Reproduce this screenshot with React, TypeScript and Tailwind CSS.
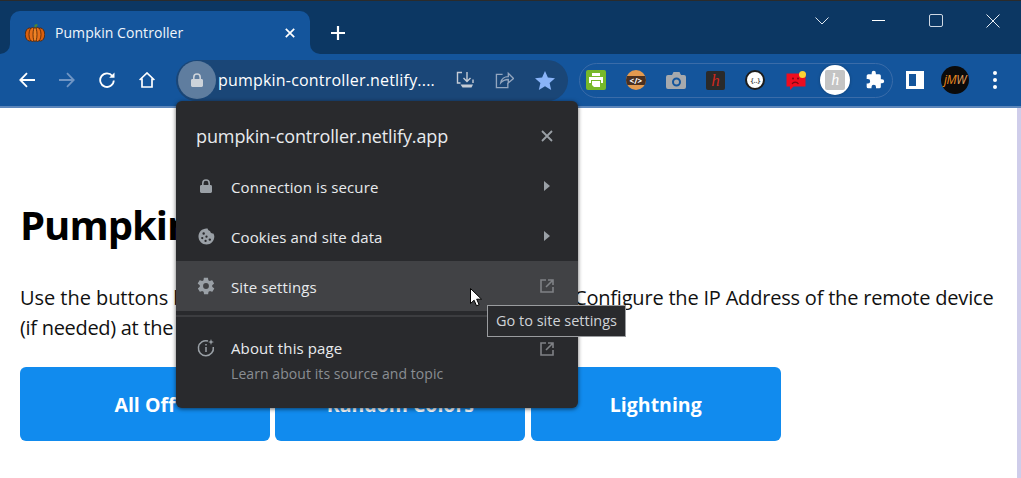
import React from "react";

const F = "font-['Open_Sans',sans-serif]";

function Lock({ className = "" }: { className?: string }) {
  return (
    <svg viewBox="0 0 12 14" className={className} fill="currentColor">
      <path d="M2 6V4.2A4 4 0 0 1 10 4.2V6h.6c.8 0 1.4.6 1.4 1.4v5.2c0 .8-.6 1.4-1.4 1.4H1.4C.6 14 0 13.4 0 12.6V7.4C0 6.6.6 6 1.4 6H2zm1.6 0h4.800V4.2a2.4 2.4 0 0 0-4.800 0V6z" />
    </svg>
  );
}

function External() {
  return (
    <svg viewBox="0 0 14 14" className="w-[14px] h-[14px] text-[#7f8185]" fill="none" stroke="currentColor" strokeWidth="1.6">
      <path d="M6 1H1v12h12V8" />
      <path d="M8 1h5v5M13 1 6 8" />
    </svg>
  );
}

function Row({ icon, label, right, className = "" }: { icon: React.ReactNode; label: string; right?: React.ReactNode; className?: string }) {
  return (
    <div className={`flex items-center h-[50px] pl-[20px] pr-[24px] ${className}`}>
      <div className="w-[20px] h-[20px] flex items-center justify-center text-[#9aa0a6]">{icon}</div>
      <div className="ml-[15px] mt-[2px] flex-1 text-[15px] tracking-[0.008em] text-[#e8eaed]">{label}</div>
      {right}
    </div>
  );
}

const Tri = () => <div className="w-0 h-0 mr-[4px] border-y-[5px] border-y-transparent border-l-[6px] border-l-[#9aa0a6]" />;

function Ext({ children }: { children: React.ReactNode }) {
  return <div className="w-8 h-8 flex items-center justify-center relative">{children}</div>;
}

const Btn = ({ label }: { label: string }) => (
  <div className="w-[250px] h-[74px] pt-[1px] rounded-[6px] bg-[#118bee] flex items-center justify-center text-[19.500px] font-bold text-white">{label}</div>
);

export default function App() {
  return (
    <div className={`relative w-[1021px] h-[478px] overflow-hidden bg-white ${F}`}>
      {/* title bar */}
      <div className="h-[54px] bg-[#0c3763] border-t border-t-[#2b2b2b] flex items-end">
        <div className="relative ml-[10px] w-[300px] h-[43px] bg-[#14559c] rounded-t-[10px] flex items-center pl-[15px] pr-[15px]">
          <div className="absolute -left-[10px] bottom-0 w-[10px] h-[10px] bg-[#14559c]"><div className="w-full h-full bg-[#0c3763] rounded-br-[10px]" /></div>
          <div className="absolute -right-[10px] bottom-0 w-[10px] h-[10px] bg-[#14559c]"><div className="w-full h-full bg-[#0c3763] rounded-bl-[10px]" /></div>
          <svg viewBox="0 0 20 20" className="w-5 h-5 shrink-0">
            <path d="M9.500 5.500V1.800l2.700-.8.500 1.500-1.300.5v2.500z" fill="#4f8a28" />
            <ellipse cx="4.500" cy="11.500" rx="4.200" ry="6.500" fill="#d9600f" stroke="#4a2206" strokeWidth=".8" />
            <ellipse cx="15.500" cy="11.500" rx="4.200" ry="6.500" fill="#d9600f" stroke="#4a2206" strokeWidth=".8" />
            <ellipse cx="7.500" cy="11.500" rx="3.500" ry="7" fill="#e8701a" stroke="#4a2206" strokeWidth=".8" />
            <ellipse cx="12.500" cy="11.500" rx="3.500" ry="7" fill="#e8701a" stroke="#4a2206" strokeWidth=".8" />
            <ellipse cx="10" cy="11.500" rx="2" ry="7.200" fill="#f08426" stroke="#4a2206" strokeWidth=".8" />
          </svg>
          <span className="ml-[10px] flex-1 text-[14px] tracking-[0.004em] text-[#f0f5fb]">Pumpkin Controller</span>
          <svg viewBox="0 0 10 10" className="w-[10px] h-[10px] text-white" stroke="currentColor" strokeWidth="1.7"><path d="M.8.8l8.400 8.400M9.200.8.8 9.200" /></svg>
        </div>
        <div className="ml-[20px] w-4 h-[43px] flex items-center">
          <svg viewBox="0 0 16 16" className="w-4 h-4 text-white" stroke="currentColor" strokeWidth="2.200"><path d="M8 1v14M1 8h14" /></svg>
        </div>
        <div className="flex-1" />
        <div className="h-[53px] flex items-start pt-[13px]">
          <svg viewBox="0 0 14 8" className="w-[14px] h-[8px] mt-[3px] mr-[21px] text-[#dfe7f0]" fill="none" stroke="currentColor"><path d="M.5.5 7 7 13.500.5" /></svg>
          <div className="w-[57px] flex justify-center"><div className="w-[13px] h-px mt-[6px] bg-white" /></div>
          <div className="w-[57px] flex justify-center"><div className="w-[14px] h-[13px] border border-[#cfd8e3] rounded-[2px]" /></div>
          <div className="w-[57px] flex justify-center">
            <svg viewBox="0 0 14 14" className="w-[14px] h-[14px] text-[#e8eef5]" stroke="currentColor" strokeWidth="1"><path d="M.5.5l13 13M13.500.5l-13 13" /></svg>
          </div>
        </div>
      </div>

      {/* toolbar */}
      <div className="h-[54px] bg-[#14559c] border-b-2 border-b-[#5c86bb] flex items-center pl-[7px]">
        <div className="w-10 flex justify-center">
          <svg viewBox="0 0 16 16" className="w-4 h-4 text-white" fill="none" stroke="currentColor" strokeWidth="1.800"><path d="M16 8H1.500M8 1.200 1.300 8 8 14.800" /></svg>
        </div>
        <div className="w-10 flex justify-center">
          <svg viewBox="0 0 16 16" className="w-4 h-4 text-[#6f95c4]" fill="none" stroke="currentColor" strokeWidth="1.800"><path d="M0 8h14.500M8 1.200 14.700 8 8 14.800" /></svg>
        </div>
        <div className="w-10 flex justify-center">
          <svg viewBox="0 0 16 16" className="w-4 h-4 text-white" fill="none" stroke="currentColor" strokeWidth="1.800"><path d="M13.400 4A6.800 6.800 0 1 0 14.800 8.500" /><path d="M15.500.5v5.300h-5.300z" fill="currentColor" stroke="none" /></svg>
        </div>
        <div className="w-10 flex justify-center">
          <svg viewBox="0 0 16 16" className="w-4 h-4 text-white" fill="none" stroke="currentColor" strokeWidth="1.700"><path d="M.6 8 8 1l7.400 7M3 6.500V15h10V6.500" /></svg>
        </div>
        {/* omnibox */}
        <div className="ml-[9px] w-[392px] h-[41px] rounded-full bg-[#1a4677] flex items-center pl-[2px] pr-[13px]">
          <div className="w-[38px] h-[38px] rounded-full bg-[#5f7d9f] flex items-center justify-center text-[#cdd3da]">
            <Lock className="w-[12px] h-[14px]" />
          </div>
          <span className="ml-[2px] text-[16px] text-white whitespace-nowrap w-[218px] tracking-[0.012em]">pumpkin-controller.netlify....</span>
          <div className="flex-1 flex items-center justify-between pl-[20px]">
            <svg viewBox="0 0 18 18" className="w-[18px] h-[18px] text-[#c5ccd6]" fill="none" stroke="currentColor" strokeWidth="1.400"><path d="M6 1.500H1.500v10.500h3" /><path d="M11 1v9M7.500 7l3.500 3.500L14.500 7M17 8.500V12" /><path d="M4.500 13.500h12.500l-1.500 3h-9z" fill="currentColor" stroke="none" /></svg>
            <svg viewBox="0 0 20 18" className="w-[19px] h-[18px] text-[#93a6bf]" fill="none" stroke="currentColor" strokeWidth="1.400"><path d="M8 3H1.500v14h12v-5" /><path d="M6 12c.5-4 4-6.500 8-6.500V2l5.500 5.500L14 12V8.500c-3.500 0-6 1.200-8 3.500z" /></svg>
            <svg viewBox="0 0 20 19" className="w-5 h-[19px] text-[#8ab4f8]" fill="currentColor"><path d="M10 0l2.900 6.600 7.100.7-5.400 4.700 1.600 7-6.200-3.700L3.800 19l1.600-7L0 7.300l7.100-.7z" /></svg>
          </div>
        </div>
        {/* extensions */}
        <div className="ml-[11px] w-[314px] h-[35px] rounded-full border border-[#3a6ca9] flex items-center gap-2 pr-[1px]">
          <Ext>
            <div className="w-5 h-5 rounded-[2px] bg-[#76b82a] flex items-center justify-center">
              <svg viewBox="0 0 16 16" className="w-4 h-4 text-white" fill="currentColor"><path d="M4 1h8v3H4zM1 5h14v6h-2V8H3v3H1z" /><path d="M4 9h8v6H6l-2-2z" /></svg>
            </div>
          </Ext>
          <Ext>
            <div className="w-5 h-5 rounded-full bg-[#e39a4f] flex items-center justify-center overflow-hidden">
              <div className="w-full h-[9px] bg-[#4a3020] text-[8px] leading-[9px] font-bold text-white text-center">&lt;/&gt;</div>
            </div>
          </Ext>
          <Ext>
            <svg viewBox="0 0 20 17" className="w-5 h-[17px] text-[#a6a9ad]" fill="currentColor"><path fillRule="evenodd" d="M6 3l1.500-3h6L15 3h3a2 2 0 0 1 2 2v10a2 2 0 0 1-2 2H2a2 2 0 0 1-2-2V5a2 2 0 0 1 2-2zm4.500 2.500a4.500 4.500 0 1 0 0 9 4.500 4.500 0 0 0 0-9zm0 2a2.500 2.500 0 1 1 0 5 2.500 2.500 0 0 1 0-5z" /></svg>
          </Ext>
          <Ext>
            <div className="w-[19px] h-[19px] rounded-[2px] bg-[#2a2a2a] flex items-center justify-center font-['Liberation_Serif',serif] italic text-[17px] leading-none text-[#d0281e]">h</div>
          </Ext>
          <Ext>
            <div className="w-5 h-5 rounded-full bg-white border-2 border-[#1d1d1d] flex items-center justify-center text-[7px] leading-none font-bold text-[#555]">{"{..}"}</div>
          </Ext>
          <Ext>
            <svg viewBox="0 0 21 21" className="w-[21px] h-[21px]"><path d="M1.500 3.500h19v13H8.500l-3.500 3.500v-3.500H1.500z" fill="#ee0d1f" /><circle cx="8" cy="8.500" r="1" fill="#7a0a14" /><circle cx="13" cy="8.500" r="1" fill="#7a0a14" /><path d="M7 14c1.500-2.500 5-2.500 6.500 0" stroke="#7a0a14" strokeWidth="1.200" fill="none" /><circle cx="17.500" cy="4.500" r="3.500" fill="#fbd335" /></svg>
          </Ext>
          <Ext>
            <div className="w-[30px] h-[30px] rounded-full bg-white flex items-center justify-center shrink-0 shadow-[0_0_3px_rgba(0,0,0,0.3)]">
              <div className="w-5 h-5 rounded-[2px] bg-[#c4c4c4] flex items-center justify-center font-['Liberation_Serif',serif] italic text-[16px] leading-none text-white">h</div>
            </div>
          </Ext>
          <Ext>
            <svg viewBox="0 0 24 24" className="w-[20px] h-[20px] text-white" fill="currentColor"><path d="M20.500 11H19V7a2 2 0 0 0-2-2h-4V3.500a2.500 2.500 0 0 0-5 0V5H4a2 2 0 0 0-2 2v3.800h1.500a2.700 2.700 0 0 1 0 5.400H2V20a2 2 0 0 0 2 2h3.800v-1.500a2.700 2.700 0 0 1 5.400 0V22H17a2 2 0 0 0 2-2v-4h1.500a2.500 2.500 0 0 0 0-5z" /></svg>
          </Ext>
        </div>
        <div className="ml-[2px] w-10 flex justify-center">
          <div className="w-[18px] h-[18px] border-[3px] border-r-[8px] border-white" />
        </div>
        <div className="w-10 flex justify-center">
          <div className="w-[28px] h-[28px] rounded-full bg-[#0b0b0b] flex items-center justify-center text-[12px] tracking-[-0.03em] leading-none italic">
            <span className="text-[#ef8a1c]">j</span><span className="text-[#ef8a1c]">M</span><span className="text-[#e0a060]">W</span>
          </div>
        </div>
        <div className="w-10 flex flex-col items-center gap-[3px]">
          <div className="w-[4px] h-[4px] rounded-full bg-white" />
          <div className="w-[4px] h-[4px] rounded-full bg-white" />
          <div className="w-[4px] h-[4px] rounded-full bg-white" />
        </div>
      </div>

      {/* page */}
      <div className="pl-[20px] pr-[24px] pt-[90px] h-[370px] border-r-[4px] border-r-[#cfcdea]">
        <h1 className="text-[40px] leading-[54px] font-bold tracking-[-0.025em] text-black whitespace-nowrap">Pumpkin Controller</h1>
        <p className="mt-[31px] text-[20px] leading-[30px] text-[#111] whitespace-nowrap">
          <span className="tracking-[-0.05px]">Use the buttons below to turn on the lights in the pumpkin. </span><span className="tracking-[-0.2px]">Configure the IP Address of the remote device</span>
          <br />
          <span className="tracking-[-0.3px]">(if needed) at the bottom of the page.</span>
        </p>
        <div className="mt-[24px] flex gap-[5.400px]">
          <Btn label="All Off" />
          <Btn label="Random Colors" />
          <Btn label="Lightning" />
        </div>
      </div>

      {/* site info popup */}
      <div className="absolute left-[176px] top-[101px] w-[402px] h-[307px] rounded-[6px] bg-[#292a2d] shadow-[0_1px_4px_rgba(0,0,0,0.6)]">
        <div className="h-[60px] flex items-end pb-[11px] pl-[20px] pr-[25px]">
          <span className="flex-1 text-[18px] tracking-[-0.006em] text-[#e8eaed]">pumpkin-controller.netlify.app</span>
          <svg viewBox="0 0 12 12" className="w-3 h-3 mb-[8px] text-[#9aa0a6]" stroke="currentColor" strokeWidth="1.800"><path d="M1 1l10 10M11 1 1 11" /></svg>
        </div>
        <Row icon={<Lock className="w-[12px] h-[14px]" />} label="Connection is secure" right={<Tri />} />
        <Row
          icon={
            <svg viewBox="0 0 18 18" className="w-[17px] h-[17px]" fill="currentColor"><path fillRule="evenodd" d="M9 .5c.4 0 .8 0 1.200.1.200 1.400 1.300 2.400 2.600 2.500.1 1.500 1.300 2.700 2.800 2.700.3 0 .5 0 .7-.1.600 1 1 2.100 1 3.300 0 4.700-3.800 8.500-8.300 8.500S.5 13.700.5 9 4.300.5 9 .5zM6 4.500a1.300 1.300 0 1 0 0 2.600 1.300 1.300 0 0 0 0-2.600zM4.500 9.500a1.200 1.200 0 1 0 0 2.400 1.200 1.200 0 0 0 0-2.400zM9 8a1.200 1.200 0 1 0 0 2.400A1.200 1.200 0 0 0 9 8zm3.500 3a1.300 1.300 0 1 0 0 2.600 1.300 1.300 0 0 0 0-2.600zM8 12.500a1.200 1.200 0 1 0 0 2.400 1.200 1.200 0 0 0 0-2.400z" /></svg>
          }
          label="Cookies and site data"
          right={<Tri />}
        />
        <Row
          className="bg-[#414245]"
          icon={
            <svg viewBox="0 0 24 24" className="w-[20px] h-[20px]" fill="currentColor"><path fillRule="evenodd" d="M19.400 13c.1-.3.1-.7.1-1s0-.7-.1-1l2.100-1.600c.2-.2.2-.4.1-.6l-2-3.500c-.1-.2-.4-.3-.6-.2l-2.500 1c-.5-.4-1.100-.7-1.700-1l-.4-2.600c0-.3-.2-.4-.5-.4h-4c-.3 0-.5.1-.5.4l-.4 2.600c-.6.3-1.200.6-1.700 1l-2.500-1c-.2-.1-.5 0-.6.2l-2 3.500c-.1.2-.1.4.1.6L4.600 11c-.1.3-.1.7-.1 1s0 .7.1 1l-2.100 1.600c-.2.2-.2.4-.1.6l2 3.500c.1.2.4.3.6.2l2.500-1c.5.4 1.100.7 1.700 1l.4 2.600c0 .3.2.4.5.4h4c.3 0 .5-.1.5-.4l.4-2.600c.6-.3 1.200-.6 1.700-1l2.500 1c.2.1.5 0 .6-.2l2-3.500c.1-.2.1-.4-.1-.6zM12 15.500a3.500 3.500 0 1 1 0-7 3.500 3.500 0 0 1 0 7z" /></svg>
          }
          label="Site settings"
          right={<External />}
        />
        <div className="mt-[4px] h-[2px] bg-[#3c3d40]" />
        <div className="flex items-start pl-[20px] pr-[24px] pt-[21px]">
          <div className="w-[20px] h-[20px] flex items-center justify-center text-[#9aa0a6]">
            <svg viewBox="0 0 18 18" className="w-[18px] h-[18px]" fill="none" stroke="currentColor" strokeWidth="1.500"><path d="M11 2A7.500 7.500 0 1 0 16.300 8" /><path d="M9 8v5M9 5v1.500" /><path d="M14 0l.8 2.200L17 3l-2.200.8L14 6l-.8-2.200L11 3l2.200-.8z" fill="currentColor" stroke="none" /></svg>
          </div>
          <div className="ml-[15px] flex-1">
            <div className="text-[15px] leading-[20px] tracking-[0.008em] text-[#e8eaed]">About this page</div>
            <div className="mt-[6px] text-[14px] leading-[20px] tracking-[0.005em] text-[#8a8e93]">Learn about its source and topic</div>
          </div>
          <div className="mt-[4px]"><External /></div>
        </div>
      </div>

      {/* tooltip */}
      <div className="absolute left-[487px] top-[305px] w-[139px] h-[32px] border border-[#9a9c9f] bg-[#292a2d] flex items-center justify-center text-[14.500px] text-[#d0d3d7] whitespace-nowrap">Go to site settings</div>

      {/* cursor */}
      <svg viewBox="0 0 12 19" className="absolute left-[470px] top-[288px] w-3 h-[19px]">
        <path d="M.5.5v15l3.600-3.300 2.400 5.600 2.600-1.100-2.400-5.500h4.800z" fill="white" stroke="black" />
      </svg>
    </div>
  );
}
